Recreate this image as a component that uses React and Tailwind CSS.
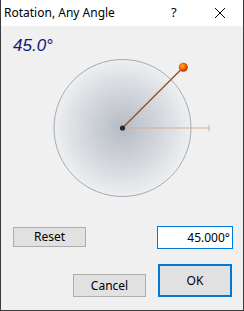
import React from 'react';

const Dial = () => (
  <svg width="242" height="144" viewBox="0 0 242 144" className="block">
    <defs>
      <radialGradient id="face" cx="50%" cy="50%" r="50%">
        <stop offset="0%" stopColor="#b6bbc4" />
        <stop offset="60%" stopColor="#d6d9de" />
        <stop offset="100%" stopColor="#eeeff0" />
      </radialGradient>
      <radialGradient id="ball" cx="40%" cy="38%" r="60%">
        <stop offset="0%" stopColor="#ffc400" />
        <stop offset="55%" stopColor="#f06010" />
        <stop offset="100%" stopColor="#c03000" />
      </radialGradient>
    </defs>
    <circle cx="121.5" cy="72" r="68.5" fill="url(#face)" stroke="#a3abb7" strokeWidth="1" />
    <line x1="121.5" y1="72" x2="208" y2="72" stroke="#d8ad92" strokeWidth="1" />
    <line x1="208" y1="69" x2="208" y2="75.5" stroke="#d8ad92" strokeWidth="1" />
    <line x1="121.5" y1="72" x2="182.3" y2="11.3" stroke="#8f5628" strokeWidth="1.4" />
    <circle cx="182.3" cy="11.3" r="4.5" fill="url(#ball)" />
    <circle cx="121.5" cy="72" r="2.6" fill="#1f2b3b" />
  </svg>
);

export default function App() {
  return (
    <div
      className="w-[244px] h-[311px] flex flex-col bg-[#f0f0f0] border-x border-b border-[#3b3b3b] overflow-hidden"
      style={{ fontFamily: '"Noto Sans", "Liberation Sans", sans-serif' }}
    >
      <div className="h-[26px] shrink-0 bg-white flex items-center pl-[3px] text-[12px] text-black">
        <span className="flex-1">Rotation, Any Angle</span>
        <span className="w-[10px] text-[13px] mr-[33px]">?</span>
        <svg width="12" height="12" viewBox="0 0 12 12" className="mr-[17px]">
          <path d="M1 1 L11 11 M11 1 L1 11" stroke="#000" strokeWidth="1" />
        </svg>
      </div>

      <div
        className="h-[20px] mt-[10px] pl-[12px] text-[17px] leading-[20px] italic text-[#16167f]"
        style={{ fontFamily: '"Liberation Sans", Arial, sans-serif' }}
      >
        45.0°
      </div>

      <Dial />

      <div className="flex mt-[26px] pl-[12px] pr-[10px] text-[12px]">
        <button className="w-[73px] h-[20px] mt-[1px] bg-[#e1e1e1] border border-[#adadad] text-black leading-none">
          Reset
        </button>
        <div className="ml-auto w-[76px] h-[23px] bg-white border border-[#0078d7] flex items-center justify-end pr-[2px] text-black">
          45.000°
        </div>
      </div>

      <div className="flex justify-end items-end gap-[12px] mt-[15px] pr-[11px] text-[12px]">
        <button className="w-[73px] h-[23px] bg-[#e1e1e1] border border-[#adadad] text-black leading-none">
          Cancel
        </button>
        <button className="w-[74px] h-[33px] bg-[#e1e1e1] border-2 border-[#0078d7] text-black leading-none">
          OK
        </button>
      </div>
    </div>
  );
}
